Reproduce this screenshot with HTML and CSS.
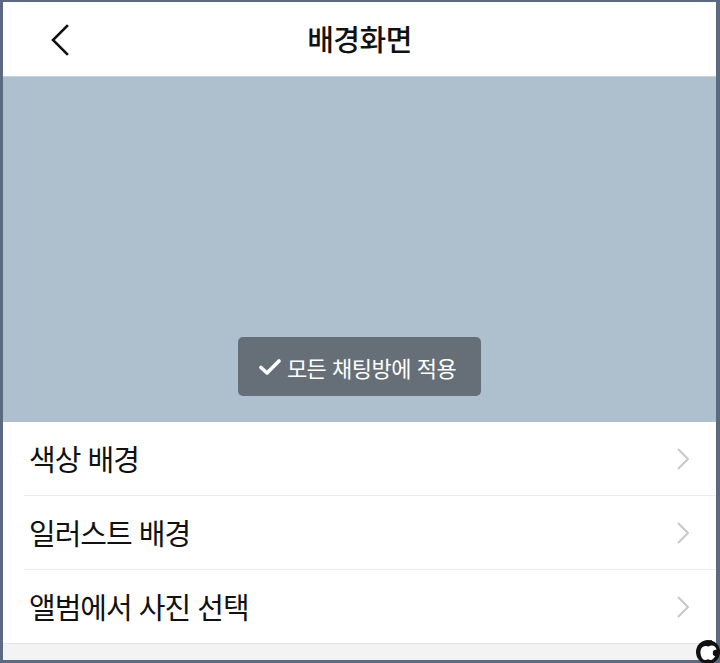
FILE: index.html
```html
<!DOCTYPE html>
<html lang="ko">
<head>
    <meta charset="UTF-8">
    <meta name="viewport" content="width=device-width, initial-scale=1.0">
    <title>배경화면</title>
    <link rel="stylesheet" href="styles.css">
</head>
<body>
    <div class="frame">
        <div class="header">
            <a href="#" class="back">
                <svg width="20" height="32" viewBox="0 0 20 32"><path d="M17 2 L3 16 L17 30" fill="none" stroke="#111" stroke-width="2.6" stroke-linecap="square"/></svg>
            </a>
            <h1 class="title">배경화면</h1>
        </div>
        <div class="preview">
            <button class="apply-button">
                <svg width="22" height="18" viewBox="0 0 22 18"><path d="M2 9.5 L8 15 L20 3" fill="none" stroke="#fff" stroke-width="3.6" stroke-linecap="round" stroke-linejoin="round"/></svg>
                모든 채팅방에 적용
            </button>
        </div>
        <div class="menu-list">
            <a href="#" class="menu-row">
                <span class="menu-label">색상 배경</span>
                <svg class="chevron" width="14" height="24" viewBox="0 0 14 24"><path d="M2 2 L12 12 L2 22" fill="none" stroke="#c8c8cc" stroke-width="2"/></svg>
            </a>
            <a href="#" class="menu-row">
                <span class="menu-label">일러스트 배경</span>
                <svg class="chevron" width="14" height="24" viewBox="0 0 14 24"><path d="M2 2 L12 12 L2 22" fill="none" stroke="#c8c8cc" stroke-width="2"/></svg>
            </a>
            <a href="#" class="menu-row">
                <span class="menu-label">앨범에서 사진 선택</span>
                <svg class="chevron" width="14" height="24" viewBox="0 0 14 24"><path d="M2 2 L12 12 L2 22" fill="none" stroke="#c8c8cc" stroke-width="2"/></svg>
            </a>
        </div>
        <div class="footer"></div>
        <div class="watermark">
            <svg width="26" height="28" viewBox="0 0 26 28"><circle cx="13" cy="15" r="12" fill="#111"/><path d="M13.5 9.5 C16.5 7.5 21 8.5 21.5 13 C22 17.5 18.5 23 16 23 C14.8 23 14.2 22.2 13 22.2 C11.8 22.2 11.2 23 10 23 C7.2 23 5 18 5.5 14 C6 9.5 10 8 13.5 9.5 Z" fill="#fff"/><path d="M13 9 C13 6.5 14.5 4.5 17 4" fill="none" stroke="#111" stroke-width="1.8"/><circle cx="21" cy="16" r="3.2" fill="#111"/></svg>
        </div>
    </div>
</body>
</html>
```

FILE: styles.css
```css
* {
    box-sizing: border-box;
    margin: 0;
    padding: 0;
    font-family: "Noto Sans CJK KR", "Noto Sans", sans-serif;
}
body {
    background-color: #5b6a80;
    width: 720px;
    height: 663px;
    overflow: hidden;
}
.frame {
    position: relative;
    width: 720px;
    height: 663px;
    border-style: solid;
    border-color: #5b6a80;
    border-width: 2px 4px 3px 3px;
    background-color: white;
    display: flex;
    flex-direction: column;
}
.header {
    height: 75px;
    display: flex;
    align-items: center;
    justify-content: center;
    position: relative;
    background-color: white;
    border-bottom: 1px solid #c5d0da;
}
.back {
    position: absolute;
    left: 47px;
    top: 22px;
    display: flex;
}
.title {
    font-size: 29px;
    font-weight: 500;
    color: #111;
    letter-spacing: -0.5px;
    margin-top: -2px;
}
.preview {
    height: 345px;
    background-color: #aebfcd;
    display: flex;
    align-items: flex-end;
    justify-content: center;
    padding-bottom: 26px;
}
.apply-button {
    width: 243px;
    height: 59px;
    background-color: #666f78;
    border: none;
    border-radius: 5px;
    color: white;
    font-size: 22px;
    letter-spacing: -0.5px;
    display: flex;
    align-items: center;
    justify-content: center;
    gap: 6px;
    padding-right: 4px;
}
.menu-list {
    display: flex;
    flex-direction: column;
}
.menu-row {
    height: 74px;
    margin-left: 21px;
    padding-left: 5px;
    padding-right: 26px;
    display: flex;
    align-items: center;
    justify-content: space-between;
    text-decoration: none;
    color: #111;
    border-bottom: 1px solid #ececec;
}
.menu-row:last-child {
    margin-left: 0;
    padding-left: 26px;
    border-bottom-color: #e6e6e6;
}
.menu-label {
    font-size: 29px;
    font-weight: 400;
    letter-spacing: -1px;
    margin-top: -1px;
}
.footer {
    flex: 1;
    background-color: #f3f3f3;
}
.watermark {
    position: absolute;
    right: -5px;
    bottom: -5px;
    display: flex;
}
```
